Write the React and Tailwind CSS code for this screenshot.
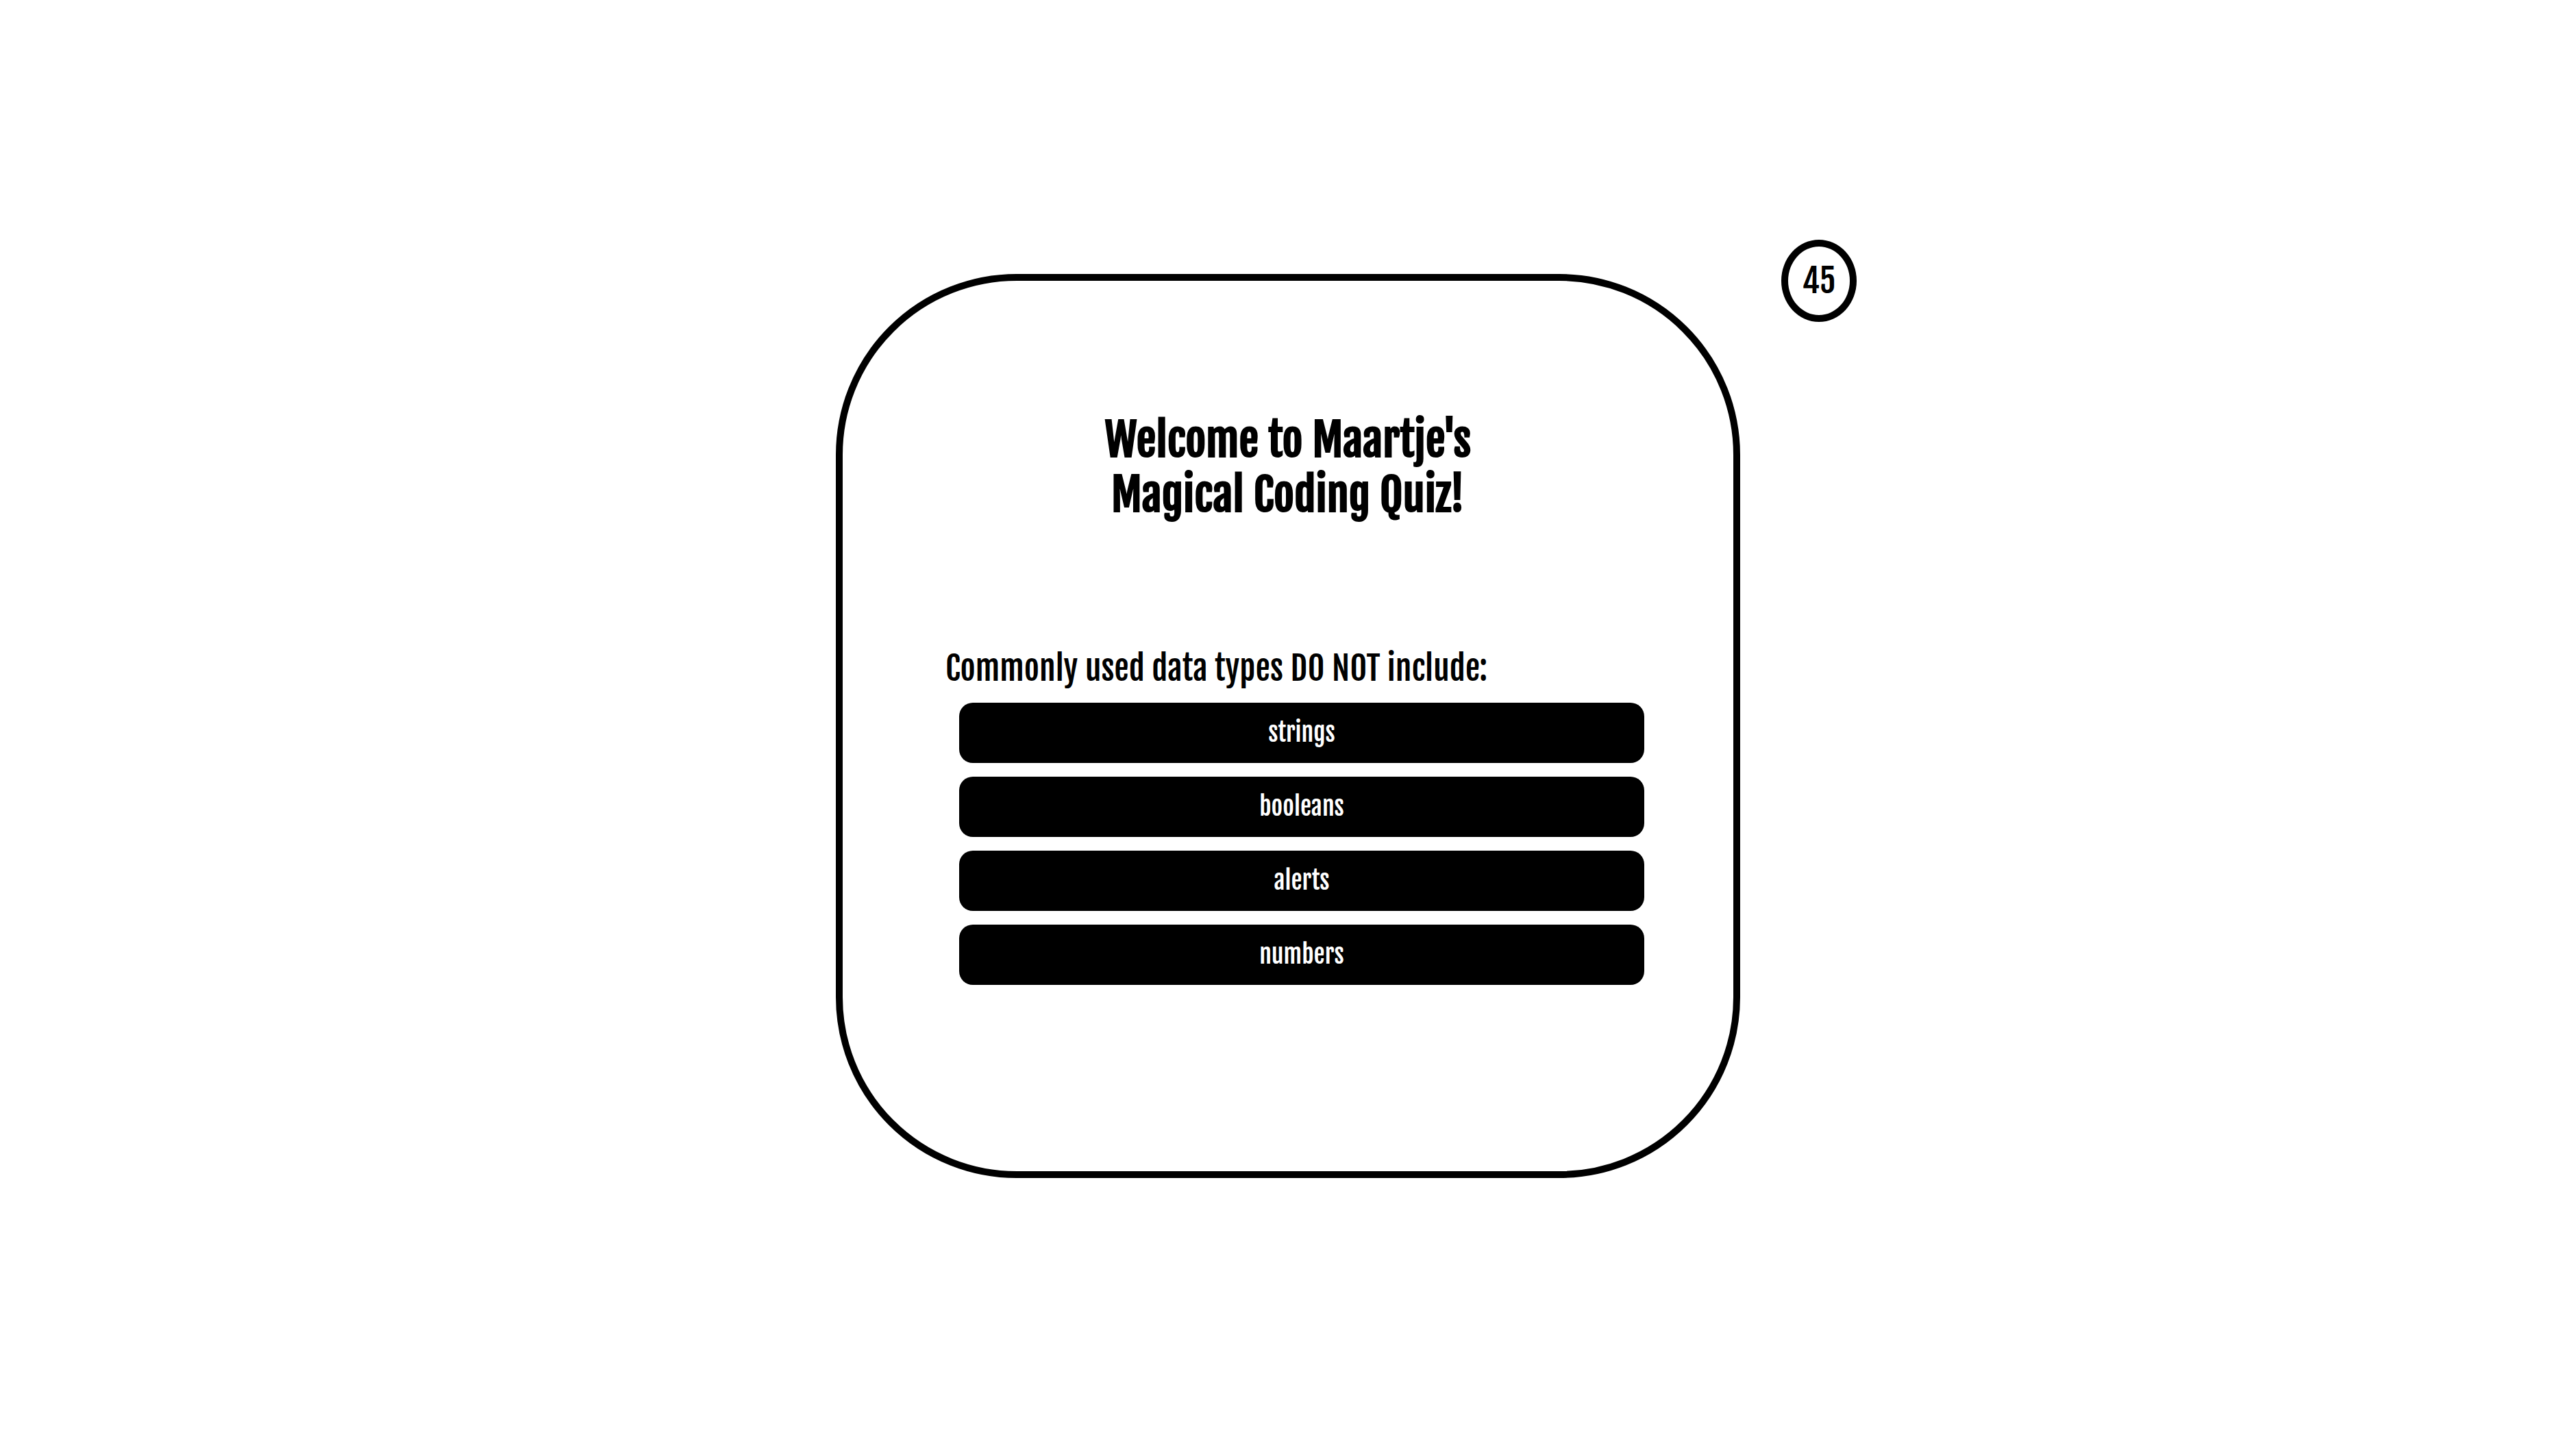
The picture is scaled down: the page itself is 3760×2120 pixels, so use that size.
import React from "react";

const answers = ["strings", "booleans", "alerts", "numbers"];

export default function App() {
  return (
    <div className="flex min-h-screen items-center justify-center bg-white font-['Fjalla_One','Liberation_Sans_Narrow','Roboto_Condensed','Open_Sans_Condensed',sans-serif] text-black">
      <main className="relative aspect-square w-full max-w-[1320px] rounded-[20%] border-[10px] border-black px-[150px] pt-48">
        <h1 className="text-center text-[65px] leading-[80px] font-bold">
          <span className="block">Welcome to Maartje's</span>
          <span className="block">Magical Coding Quiz!</span>
        </h1>
        <section className="pt-[184px]">
          <h2 id="question" className="text-[48px] leading-[60px]">
            Commonly used data types DO NOT include:
          </h2>
          <div role="group" aria-labelledby="question" className="mt-5 ml-5 -mr-5 flex flex-col gap-5">
            {answers.map((answer) => (
              <button
                key={answer}
                type="button"
                className="h-[88px] w-full rounded-[20px] bg-black text-[36px] leading-[48px] text-white"
              >
                {answer}
              </button>
            ))}
          </div>
        </section>
        <div
          role="timer"
          className="absolute -top-[60px] -right-[180px] flex h-[120px] w-[110px] items-center justify-center rounded-[50%] border-[10px] border-black text-[48px] leading-[60px]"
        >
          45
        </div>
      </main>
    </div>
  );
}
